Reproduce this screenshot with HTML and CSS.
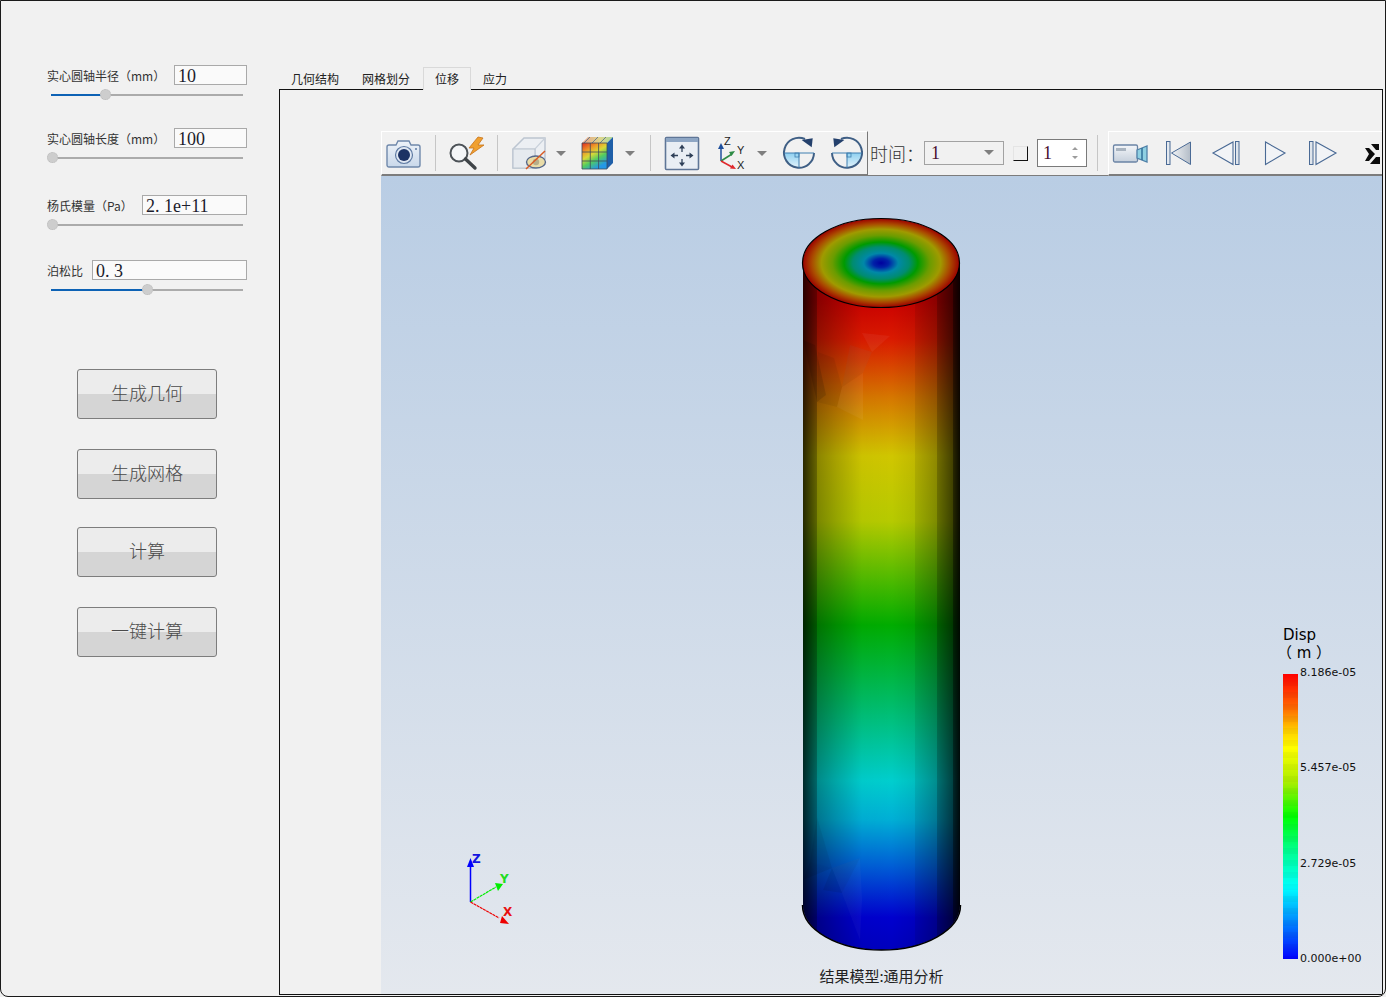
FILE: index.html
```html
<!DOCTYPE html>
<html lang="zh-CN">
<head>
<meta charset="utf-8">
<title>结果模型</title>
<link rel="stylesheet" href="styles.css">
</head>
<body>
<div class="window">
  <aside class="side">
    <div class="field f1">
      <div class="row"><span class="label">实心圆轴半径（mm）</span><div class="input w73">10</div></div>
      <div class="slider"><div class="fill" style="width:54px"></div><div class="thumb" style="left:49px"></div></div>
    </div>
    <div class="field f2">
      <div class="row"><span class="label">实心圆轴长度（mm）</span><div class="input w73">100</div></div>
      <div class="slider"><div class="thumb" style="left:-4px"></div></div>
    </div>
    <div class="field f3">
      <div class="row"><span class="label">杨氏模量（Pa）</span><div class="input w105">2. 1e+11</div></div>
      <div class="slider"><div class="thumb" style="left:-4px"></div></div>
    </div>
    <div class="field f4">
      <div class="row"><span class="label">泊松比</span><div class="input w155">0. 3</div></div>
      <div class="slider"><div class="fill" style="width:96px"></div><div class="thumb" style="left:91px"></div></div>
    </div>
    <div class="buttons">
      <button class="btn b1">生成几何</button>
      <button class="btn b2">生成网格</button>
      <button class="btn b3">计算</button>
      <button class="btn">一键计算</button>
    </div>
  </aside>

  <main class="main">
    <nav class="tabs">
      <span class="tab">几何结构</span>
      <span class="tab t2">网格划分</span>
      <span class="tab t3 active">位移</span>
      <span class="tab">应力</span>
    </nav>
    <section class="pane">
      <div class="toolbars">
        <div class="bar bar1">
          <!-- camera -->
          <svg class="tool ml4" viewBox="0 0 36 36"><defs><linearGradient id="cb" x1="0" y1="0" x2="0" y2="1"><stop offset="0" stop-color="#eef3f9"/><stop offset="1" stop-color="#c9d8ea"/></linearGradient></defs><path d="M3 10h7l2-4h11l2 4h7a2 2 0 0 1 2 2v18a2 2 0 0 1-2 2H3a2 2 0 0 1-2-2V12a2 2 0 0 1 2-2z" fill="url(#cb)" stroke="#6f88ab" stroke-width="1.4"/><circle cx="18" cy="20" r="8.5" fill="#dfe7f2" stroke="#5f7ba3" stroke-width="1.2"/><circle cx="18" cy="20" r="6" fill="#1c3264"/><circle cx="30" cy="14" r="1" fill="#5f7ba3"/></svg>
          <i class="sep ml13"></i>
          <!-- probe -->
          <svg class="tool ml12" viewBox="0 0 36 36"><circle cx="11" cy="18" r="8.5" fill="#f4f6f8" stroke="#4d5358" stroke-width="2"/><path d="M17.500 24 L27 33" stroke="#3f4448" stroke-width="3.400" stroke-linecap="round"/><path d="M30 2 L21 13 L26 13 L22 20 L36 10 L30 10 L35 3 Z" fill="#f0a030" stroke="#c8741a" stroke-width=".8"/></svg>
          <i class="sep ml13"></i>
          <!-- hidden cube -->
          <svg class="tool ml13" viewBox="0 0 36 36"><path d="M2 14 L13 3 H34 V24 L23 33 H2 Z" fill="#eceff3" stroke="#bcc5d0" stroke-width="1.500"/><path d="M2 14 H24 L34 3 M24 14 V33" fill="none" stroke="#c8d0da" stroke-width="1.200"/><path d="M2 14 H24 V33 H2 Z" fill="#e6eaef" stroke="#bcc5d0" stroke-width="1.200"/><ellipse cx="25" cy="27" rx="9.500" ry="6" fill="#e9dca8" stroke="#56688a" stroke-width="1.400"/><circle cx="25" cy="27" r="3.200" fill="#b7ae8b"/><path d="M15 34 L34 16" stroke="#d95c26" stroke-width="1.500"/></svg>
          <svg class="caret ml6" viewBox="0 0 16 36"><path d="M3 16h10l-5 5z" fill="#7f7f7f"/></svg>
          <!-- colour cube -->
          <svg class="tool ml10" viewBox="0 0 36 36"><defs><linearGradient id="rb" x1="0" y1="0" x2=".55" y2="1"><stop offset="0" stop-color="#e02a20"/><stop offset=".3" stop-color="#ee9a28"/><stop offset=".5" stop-color="#d8d838"/><stop offset=".72" stop-color="#52cc60"/><stop offset="1" stop-color="#2498e6"/></linearGradient><linearGradient id="tp" x1="0" y1="0" x2="1" y2="0"><stop offset="0" stop-color="#e8a088"/><stop offset=".6" stop-color="#dcd68c"/><stop offset="1" stop-color="#a8d89c"/></linearGradient></defs><path d="M3 8 L9 2 H34 L28 8 Z" fill="url(#tp)"/><path d="M11 2 L5 8M19 2 L13 8M27 2 L21 8" stroke="#4f6b8b" stroke-width=".8"/><path d="M28 8 L34 2 V28 L28 34 Z" fill="#1f5fa8"/><rect x="3" y="8" width="25" height="26" fill="url(#rb)"/><path d="M3 8H28V34H3Z M11.300 8V34 M19.600 8V34 M3 17H28 M3 26H28" fill="none" stroke="#3d4a5a" stroke-width=".8"/></svg>
          <svg class="caret ml7" viewBox="0 0 16 36"><path d="M3 16h10l-5 5z" fill="#7f7f7f"/></svg>
          <i class="sep ml12"></i>
          <!-- fit frame -->
          <svg class="tool ml13" viewBox="0 0 36 36"><rect x="1.500" y="2.500" width="33" height="32" rx="1" fill="#e9eef4" stroke="#5f7697" stroke-width="1.600"/><rect x="2" y="3" width="32" height="4" fill="#8ea6c4"/><path d="M18 12v5M18 24v5M9 20.500h5M22 20.500h5" stroke="#2f4058" stroke-width="1.300"/><path d="M18 9.500l-3 4h6zM18 31.500l-3-4h6zM6.500 20.500l4-3v6zM29.500 20.500l-4-3v6z" fill="#2f4058"/></svg>
          <!-- axes -->
          <svg class="tool ml15" viewBox="0 0 36 36"><path d="M6 26 V12" stroke="#1f4f9c" stroke-width="1.500"/><path d="M6 8l-3 6h6z" fill="#1f4f9c"/><path d="M6 26 L17 19" stroke="#2e8b45" stroke-width="1.500"/><path d="M20 16l-6 1 2.500 4z" fill="#2e8b45"/><path d="M6 26 L17 32" stroke="#e0282c" stroke-width="1.500"/><path d="M21 34l-6-.5 2.500-4z" fill="#e0282c"/><text x="9" y="10" class="axl">Z</text><text x="22" y="19" class="axl">Y</text><text x="22" y="34" class="axl">X</text></svg>
          <svg class="caret ml3" viewBox="0 0 16 36"><path d="M3 16h10l-5 5z" fill="#7f7f7f"/></svg>
          <!-- rotate cw -->
          <svg class="tool ml11" viewBox="0 0 36 36"><defs><linearGradient id="q" x1="0" y1="0" x2="0" y2="1"><stop offset="0" stop-color="#8fd0f0"/><stop offset="1" stop-color="#e5f4fb"/></linearGradient></defs><path d="M3 18 H18 V33 A15 15 0 0 1 3 18 Z" fill="url(#q)"/><path d="M24 4 A15 15 0 1 0 33 18" fill="none" stroke="#3f5f85" stroke-width="2"/><path d="M3 18H33M18 18V33" stroke="#3f7fb0" stroke-width="1"/><rect x="14" y="18" width="4" height="4" fill="none" stroke="#3f7fb0" stroke-width=".8"/><path d="M20.700 5 L31.700 3.300 L30.700 12.300 Z" fill="#24406c"/></svg>
          <!-- rotate ccw -->
          <svg class="tool ml12" viewBox="0 0 36 36"><path d="M33 18 H18 V33 A15 15 0 0 0 33 18 Z" fill="url(#q)"/><path d="M12 4 A15 15 0 1 1 3 18" fill="none" stroke="#3f5f85" stroke-width="2"/><path d="M3 18H33M18 18V33" stroke="#3f7fb0" stroke-width="1"/><rect x="18" y="18" width="4" height="4" fill="none" stroke="#3f7fb0" stroke-width=".8"/><path d="M15.300 5 L4.300 3.300 L5.300 12.300 Z" fill="#24406c"/></svg>
        </div>
        <div class="bar bar2">
          <span class="time-label">时间：</span>
          <div class="combo"><span class="val">1</span><svg class="mini" viewBox="0 0 10 6"><path d="M0 0h10L5 5z" fill="#7f7f7f"/></svg></div>
          <div class="check"></div>
          <div class="spin"><span class="val">1</span><svg class="arrows" viewBox="0 0 8 14"><path d="M4 1L7 4H1zM4 13L1 10H7z" fill="#9c9c9c"/></svg></div>
          <i class="sep ml10"></i>
        </div>
        <div class="bar bar3">
          <svg class="tool" viewBox="0 0 36 36"><defs><linearGradient id="v" x1="0" y1="0" x2="0" y2="1"><stop offset="0" stop-color="#f4f6f9"/><stop offset="1" stop-color="#c6d0dc"/></linearGradient></defs><rect x="1.500" y="10" width="24" height="17" rx="1.500" fill="url(#v)" stroke="#6b84a5" stroke-width="1.300"/><rect x="4" y="13" width="10" height="3" fill="#a9b4c0"/><path d="M25 15 L35 11 V27 L25 23 Z" fill="#8fd0e2" stroke="#4f80a8" stroke-width="1.300"/><path d="M30 13V25" stroke="#2f6f98" stroke-width="1.500"/></svg>
          <svg class="tool ml12" viewBox="0 0 36 36"><defs><linearGradient id="g" x1="0" y1="0" x2="1" y2="0"><stop offset="0" stop-color="#f2f4f6"/><stop offset="1" stop-color="#b3bcc7"/></linearGradient></defs><rect x="6.500" y="6.500" width="3.500" height="23" fill="#e4e9ef" stroke="#4a6a95"/><path d="M30.500 7 V29.500 L11.500 18 Z" fill="url(#g)" stroke="#4a6a95"/></svg>
          <svg class="tool ml12" viewBox="0 0 36 36"><path d="M5 18 L25 7 V29.500 Z" fill="#f2f4f7" stroke="#4a6a95" stroke-width="1.100"/><rect x="27.500" y="6.500" width="3.500" height="23" fill="#dfe5ec" stroke="#4a6a95"/></svg>
          <svg class="tool ml13" viewBox="0 0 36 36"><path d="M8.500 7 V29.500 L28 18 Z" fill="#f2f4f7" stroke="#4a6a95" stroke-width="1.100"/></svg>
          <svg class="tool ml11" viewBox="0 0 36 36"><rect x="5.500" y="6.500" width="3.500" height="23" fill="#dfe5ec" stroke="#4a6a95"/><path d="M12 7 V29.500 L32 18 Z" fill="#f2f4f7" stroke="#4a6a95" stroke-width="1.100"/></svg>
          <svg class="tool ml14" viewBox="0 0 36 36"><path d="M11 13h4l6 6-6 7h-4l4-7z" fill="#0c0c0c"/><path d="M17 9h8v6h-3zM22 22h4v7h-10z" fill="#0c0c0c"/></svg>
        </div>
      </div>

      <div class="viewport">
        <svg class="scene" viewBox="381 176 1001 818" preserveAspectRatio="none">
          <defs>
            <linearGradient id="col" gradientUnits="userSpaceOnUse" x1="0" y1="300" x2="0" y2="950">
              <stop offset="0" stop-color="#cc0000"/>
              <stop offset=".06" stop-color="#dc1a00"/>
              <stop offset=".15" stop-color="#d87800"/>
              <stop offset=".24" stop-color="#d2c800"/>
              <stop offset=".34" stop-color="#b8cc00"/>
              <stop offset=".43" stop-color="#50bc00"/>
              <stop offset=".50" stop-color="#00ae00"/>
              <stop offset=".62" stop-color="#00be68"/>
              <stop offset=".74" stop-color="#00d0d0"/>
              <stop offset=".80" stop-color="#00b0d8"/>
              <stop offset=".87" stop-color="#0060d8"/>
              <stop offset=".95" stop-color="#0000d0"/>
              <stop offset="1" stop-color="#0000c0"/>
            </linearGradient>
            <linearGradient id="shade" gradientUnits="userSpaceOnUse" x1="803" y1="0" x2="960" y2="0">
              <stop offset="0" stop-opacity=".8"/>
              <stop offset=".089" stop-opacity=".5"/>
              <stop offset=".089" stop-opacity=".34"/>
              <stop offset=".21" stop-opacity=".2"/>
              <stop offset=".376" stop-opacity=".03"/>
              <stop offset=".566" stop-opacity=".01"/>
              <stop offset=".713" stop-opacity=".08"/>
              <stop offset=".713" stop-opacity=".15"/>
              <stop offset=".853" stop-opacity=".32"/>
              <stop offset=".853" stop-opacity=".45"/>
              <stop offset=".955" stop-opacity=".68"/>
              <stop offset=".955" stop-opacity=".8"/>
              <stop offset="1" stop-opacity=".95"/>
            </linearGradient>
            <radialGradient id="cap" cx=".5" cy=".5" r=".5">
              <stop offset="0" stop-color="#00009e"/>
              <stop offset=".1" stop-color="#0022a8"/>
              <stop offset=".22" stop-color="#0088a8"/>
              <stop offset=".36" stop-color="#008c70"/>
              <stop offset=".47" stop-color="#009a00"/>
              <stop offset=".62" stop-color="#6a9c00"/>
              <stop offset=".76" stop-color="#a09a00"/>
              <stop offset=".88" stop-color="#aa4a00"/>
              <stop offset="1" stop-color="#9c0000"/>
            </radialGradient>
            <clipPath id="body"><path d="M803 263V905A78.500 45 0 0 0 960 905V263Z"/></clipPath>
          </defs>
          <g clip-path="url(#body)">
            <rect x="803" y="263" width="157" height="690" fill="url(#col)"/>
            <g fill="#000">
              <path d="M803 340 L817 402 L826 395 L815 345Z" opacity=".12"/>
              <path d="M817 402 L837 407 L842 387 L834 358 L818 352Z" opacity=".06"/>
              <path d="M842 387 L863 373 L872 352 L850 345Z" opacity=".04"/>
              <path d="M803 880 L832 868 L810 862Z" opacity=".08"/>
              <path d="M810 862 L832 868 L817 817Z" opacity=".06"/>
              <path d="M823 890 L842 893 L832 868Z" opacity=".08"/>
              <path d="M842 893 L860 858 L832 868Z" opacity=".04"/>
            </g>
            <g fill="#fff">
              <path d="M862 333 L890 336 L872 352Z" opacity=".05"/>
              <path d="M850 345 L872 352 L863 373 L842 387Z" opacity=".04"/>
              <path d="M837 407 L863 420 L863 373 L842 387Z" opacity=".05"/>
              <path d="M832 868 L842 893 L860 940 L862 900 L860 858Z" opacity=".03"/>
            </g>
            <rect x="803" y="263" width="157" height="690" fill="url(#shade)"/>
          </g>
          <path d="M802.500 905A79 45 0 0 0 960.500 905" fill="none" stroke="#000" stroke-width="1.500"/>
          <ellipse cx="881" cy="263" rx="78.500" ry="44.500" fill="url(#cap)" stroke="#000" stroke-width="1.200"/>
          <!-- orientation triad -->
          <path d="M470.500 902V866" stroke="#0000ff" stroke-width="1.500"/>
          <path d="M470.500 858l-3.500 9h7z" fill="#0000ff"/>
          <path d="M470.500 902L496 887" stroke="#00ee00" stroke-width="1.200" stroke-dasharray="3 .6"/>
          <path d="M503 884l-8-1 3 8z" fill="#00ee00"/>
          <path d="M470.500 902L499 918" stroke="#ee0000" stroke-width="1.200" stroke-dasharray="3 .6"/>
          <path d="M509 924l-9-1 2-7z" fill="#ee0000"/>
          <text x="472" y="863" class="tri blue">Z</text>
          <text x="500" y="883" class="tri green">Y</text>
          <text x="503" y="916" class="tri red">X</text>
        </svg>
        <div class="legend">
          <div class="legend-title">Disp<br><span class="unit">（ m ）</span></div>
          <div class="scale">
            <div class="ramp"></div>
            <div class="ticks"><span>8.186e-05</span><span>5.457e-05</span><span>2.729e-05</span><span>0.000e+00</span></div>
          </div>
        </div>
        <div class="caption">结果模型:通用分析</div>
      </div>
    </section>
  </main>
</div>
</body>
</html>
```
FILE: styles.css
```css
* { box-sizing: border-box; }
html, body { margin: 0; padding: 0; }
body {
  width: 1386px;
  height: 997px;
  overflow: hidden;
  background: #f0f0f0;
  font-family: "Noto Sans CJK SC", "Liberation Sans", sans-serif;
  color: #222;
}
.window {
  display: flex;
  width: 1386px;
  height: 997px;
  border: 1px solid #1a1a1a;
  border-radius: 0 0 8px 8px;
  background: #f1f1f1;
  overflow: hidden;
}

/* left column */
.side { width: 278px; flex: none; padding: 64px 32px 0 46px; }
.field { height: 38px; }
.f1 { margin-bottom: 25px; }
.f2 { margin-bottom: 29px; }
.f3 { margin-bottom: 27px; }
.f4 { margin-bottom: 0; }
.row { display: flex; justify-content: space-between; align-items: center; height: 20px; }
.label { font-size: 12px; line-height: 20px; color: #333; white-space: nowrap; margin-top: 1px; }
.input {
  height: 20px;
  border: 1px solid #a9a9a9;
  background: #fafafa;
  padding-left: 3px;
  font-family: "Liberation Serif", serif;
  font-size: 18px;
  line-height: 20px;
  color: #1c1c2c;
  white-space: nowrap;
}
.w73 { width: 73px; }
.w105 { width: 105px; }
.w155 { width: 155px; }
.slider { position: relative; height: 2px; margin: 9px 4px 0; background: #ababab; }
.fill { height: 2px; background: #0d62b5; }
.thumb {
  position: absolute;
  top: -5px;
  width: 11px;
  height: 11px;
  border-radius: 50%;
  background: #cdcdcd;
  border: 1px dotted #bcbcbc;
}
.buttons { display: flex; flex-direction: column; margin: 71px 0 0 30px; }
.btn {
  display: block;
  width: 140px;
  height: 50px;
  padding: 0 0 4px;
  border: 1px solid #7d7d7d;
  border-radius: 3px;
  background: linear-gradient(#ececec 0, #ececec 51%, #d5d5d5 51%, #d5d5d5 100%);
  font-family: "Noto Sans CJK SC", sans-serif;
  font-weight: 300;
  font-size: 18px;
  line-height: 42px;
  color: #4a4a4a;
}
.b1 { margin-bottom: 30px; }
.b2 { margin-bottom: 28px; }
.b3 { margin-bottom: 30px; }

/* right column */
.main { flex: 1; min-width: 0; display: flex; flex-direction: column; padding: 66px 2px 1px 0; }
.tabs { display: flex; height: 22px; flex: none; }
.tab {
  padding: 0 11px;
  border: 1px solid transparent;
  border-bottom: 0;
  font-size: 12px;
  line-height: 22px;
  color: #222;
}
.t2 { margin-left: -1px; }
.t3 { margin-left: 1px; }
.active { border-color: #d9d9d9; background: #f1f1f1; position: relative; z-index: 1; margin-bottom: -1px; height: 23px; }
.pane {
  flex: 1;
  min-height: 0;
  display: flex;
  flex-direction: column;
  border: 1px solid #111;
  padding: 41px 0 0 101px;
  background: #f1f1f1;
}

/* toolbars */
.toolbars { display: flex; height: 45px; flex: none; }
.bar { display: flex; align-items: center; height: 45px; border-bottom: 2px solid #7c7c7c; }
.bar1 { width: 487px; border-top: 1px solid #fff; border-left: 1px solid #fff; border-right: 1px solid #777; flex: none; padding-bottom: 1px; }
.bar2 { width: 240px; flex: none; border-bottom-width: 1px; }
.bar3 { flex: 1; min-width: 0; overflow: hidden; border-top: 1px solid #fff; border-left: 1px solid #fff; padding-left: 3px; padding-bottom: 1px; }
.tool { width: 36px; height: 36px; flex: none; display: block; }
.caret { width: 16px; height: 36px; flex: none; display: block; }
.sep { display: block; width: 1px; height: 36px; background: #c6c6c6; flex: none; }
.ml3 { margin-left: 3px; }
.ml4 { margin-left: 4px; }
.ml6 { margin-left: 6px; }
.ml7 { margin-left: 7px; }
.ml10 { margin-left: 10px; }
.ml11 { margin-left: 11px; }
.ml12 { margin-left: 12px; }
.ml13 { margin-left: 13px; }
.ml14 { margin-left: 14px; }
.ml15 { margin-left: 15px; }
.axl { font-family: "Liberation Sans", sans-serif; font-size: 11px; fill: #222; }
.time-label { width: 54px; margin-left: 2px; font-size: 18px; font-weight: 300; color: #333; white-space: nowrap; flex: none; }
.combo {
  display: flex; align-items: center; justify-content: space-between;
  width: 80px; height: 24px; flex: none;
  border: 1px solid #a2a2a2;
  padding: 0 9px 0 6px;
}
.val { font-family: "Liberation Serif", serif; font-size: 18px; color: #4a1030; }
.mini { width: 10px; height: 6px; }
.check {
  width: 15px; height: 15px; flex: none; margin-left: 9px;
  border-right: 1px solid #111; border-bottom: 1px solid #111;
  border-top: 1px solid #e4e4e4; border-left: 1px solid #e4e4e4;
}
.spin {
  display: flex; align-items: center; justify-content: space-between;
  width: 50px; height: 28px; flex: none; margin-left: 9px;
  border: 1px solid #7a7a7a; background: #fff;
  padding: 0 7px 0 5px;
}
.arrows { width: 8px; height: 14px; }

/* viewport */
.viewport {
  position: relative;
  flex: 1;
  min-height: 0;
  background: linear-gradient(#b9cde4, #e4e8ee);
  overflow: hidden;
}
.scene { position: absolute; inset: 0; width: 100%; height: 100%; display: block; }
.tri { font-family: "DejaVu Sans", sans-serif; font-weight: 700; font-size: 12px; }
.blue { fill: #1515e0; }
.green { fill: #22dd22; }
.red { fill: #e81010; }
.legend { position: absolute; left: 902px; top: 450px; width: 90px; }
.legend-title { font-family: "DejaVu Sans", sans-serif; font-size: 15px; line-height: 18px; color: #000; height: 39px; }
.unit { margin-left: -6px; white-space: nowrap; }
.scale { position: relative; }
.ramp {
  width: 15px;
  height: 285px;
  margin-top: 9px;
  background:
    repeating-linear-gradient(rgba(0,0,0,0) 0 6px, rgba(0,0,0,.03) 6px 12px),
    linear-gradient(#ff0000 0, #ff6a00 12%, #ffd000 20%, #ffff00 26%, #aaee00 38%, #00ff00 50%, #00ff90 62%, #00ffff 75%, #0090ff 86%, #0000ff 100%);
}
.ticks {
  position: absolute;
  left: 17px;
  top: -8px;
  height: 300px;
  display: flex;
  flex-direction: column;
  justify-content: space-between;
  font-family: "DejaVu Sans", sans-serif;
  font-size: 11px;
  line-height: 14px;
  color: #111;
}
.caption {
  position: absolute;
  left: 0;
  right: 0;
  bottom: 8px;
  text-align: center;
  font-size: 15px;
  line-height: 20px;
  color: #222;
}
```
